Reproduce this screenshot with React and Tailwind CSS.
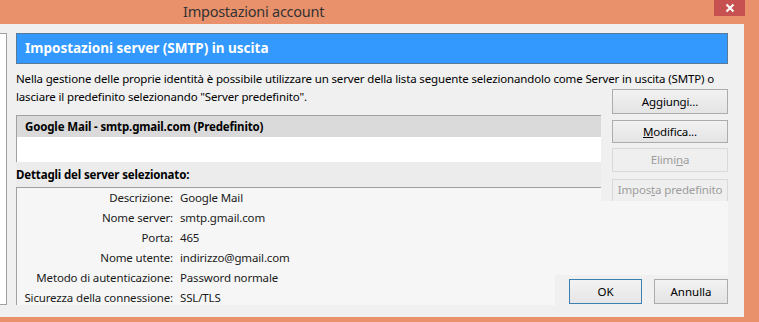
import React from "react";

const font = { fontFamily: '"Noto Sans", "Open Sans", sans-serif' };

const details = [
  ["Descrizione:", "Google Mail"],
  ["Nome server:", "smtp.gmail.com"],
  ["Porta:", "465"],
  ["Nome utente:", "indirizzo@gmail.com"],
  ["Metodo di autenticazione:", "Password normale"],
  ["Sicurezza della connessione:", "SSL/TLS"],
];

const SideButton = ({ children, disabled, className = "" }) => (
  <button
    className={`w-full border text-[11.5px] tracking-[-0.15px] leading-none flex items-center justify-center ${
      disabled
        ? "border-[#d9d9d9] bg-[#efefef] text-[#9d9d9d]"
        : "border-[#acacac] bg-gradient-to-b from-[#f2f2f2] to-[#e4e4e4] text-black"
    } ${className}`}
  >
    {children}
  </button>
);

const App = () => {
  return (
    <div className="w-[759px] h-[322px] bg-[#e9916b] overflow-hidden flex flex-col" style={font}>
      {/* title bar */}
      <div className="h-[24px] flex items-start shrink-0">
        <div className="flex-1 pl-[183px] pt-[1px] text-[14.5px] tracking-[-0.25px] leading-[20px] text-[#333]">
          Impostazioni account
        </div>
        <div className="w-[31px] h-[16px] bg-[#c75050] mr-[14px] flex items-center justify-center">
          <svg width="10" height="10" viewBox="0 0 10 10">
            <path d="M1.5 1.5 L8.5 8.5 M8.5 1.5 L1.5 8.5" stroke="white" strokeWidth="2" />
          </svg>
        </div>
      </div>

      {/* body */}
      <div className="w-[744px] h-[293px] bg-[#f0f0f0] flex">
        <div className="w-[7px] h-[272px] mt-[9px] bg-white border-r border-t border-b border-[#a0a0a0] shrink-0" />
        <div className="w-[712px] ml-[9px] pt-[9px] flex flex-col">
          <div className="h-[31px] bg-[#3399ff] border border-[#5b7a9a] flex items-center pl-[8px]">
            <span className="text-white font-bold text-[13.5px]">Impostazioni server (SMTP) in uscita</span>
          </div>

          <div className="grid grid-cols-[585px_116px] gap-x-[11px]">
            <p className="col-span-2 mt-[6px] text-[11.5px] tracking-[-0.15px] leading-[18px] text-black whitespace-nowrap">
              Nella gestione delle proprie identità è possibile utilizzare un server della lista seguente selezionandolo come Server in uscita (SMTP) o
            </p>
            <div className="flex flex-col">
              <p className="text-[11.5px] tracking-[-0.15px] leading-[18px] text-black whitespace-nowrap">
                lasciare il predefinito selezionando "Server predefinito".
              </p>
              <div className="mt-[9px] h-[47px] border-l border-t border-[#a0a0a0] bg-white">
                <div className="h-[21px] bg-[#dadada] pl-[8px] flex items-center text-[11.5px] tracking-[-0.15px] font-bold text-black">
                  Google Mail - smtp.gmail.com (Predefinito)
                </div>
              </div>
              <div className="h-[25px] bg-[#ececec] flex items-center text-[11.5px] tracking-[-0.15px] font-bold text-black">
                Dettagli del server selezionato:
              </div>
              <div className="h-[14px] border-t border-l border-[#a0a0a0] bg-[#f6f6f6]" />
            </div>
            <div className="flex flex-col pt-[1px]">
              <SideButton className="h-[25px]">Aggiungi...</SideButton>
              <SideButton className="h-[23px] mt-[6px]">
                <span><span className="underline">M</span>odifica...</span>
              </SideButton>
              <SideButton disabled className="h-[24px] mt-[5px]">
                <span>Elimi<span className="underline">n</span>a</span>
              </SideButton>
              <SideButton disabled className="h-[22px] mt-[7px] border-b-0 items-start pt-[4px]">
                <span>Impos<span className="underline">t</span>a predefinito</span>
              </SideButton>
            </div>
          </div>

          <div className="flex h-[104px]">
            <div className="flex-1 border-l border-[#a0a0a0] bg-[#f6f6f6]">
              <div className="-mt-[13px] flex flex-col relative">
                {details.map(([label, value]) => (
                  <div key={label} className="h-[20px] flex items-center text-[11.5px] tracking-[-0.15px] text-[#1a1a1a]">
                    <span className="w-[156px] text-right">{label}</span>
                    <span className="ml-[7px]">{value}</span>
                  </div>
                ))}
              </div>
            </div>
            <div className="w-[173px] flex flex-col">
              <div className="h-[74px] bg-[#f6f6f6]" />
              <div className="mt-[4px] pl-[14px] flex gap-[12px]">
                <button className="w-[73px] h-[25px] border border-[#3c7fb1] bg-gradient-to-b from-[#f2f2f2] to-[#e6e6e6] text-[11.5px] text-black">
                  OK
                </button>
                <button className="w-[74px] h-[25px] border border-[#acacac] bg-gradient-to-b from-[#f2f2f2] to-[#e4e4e4] text-[11.5px] text-black">
                  Annulla
                </button>
              </div>
            </div>
          </div>
        </div>
      </div>
    </div>
  );
};

export default App;
